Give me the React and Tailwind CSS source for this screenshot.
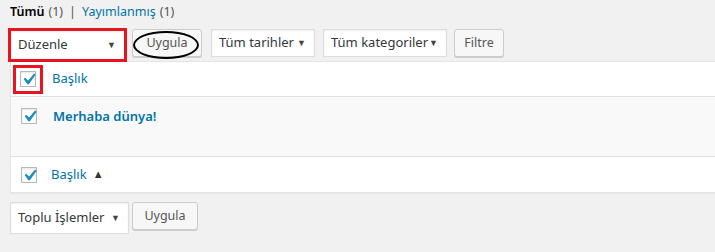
import React from "react";

function Check() {
  return (
    <span className="relative block h-[16px] w-[16px] shrink-0 border border-[#b4b9be] bg-white shadow-[inset_0_1px_2px_rgba(0,0,0,0.1)]">
      <svg className="absolute left-[-4px] top-[-4px]" width="23" height="23" viewBox="0 0 20 20">
        <path d="M14.83 4.89l1.34.94-5.81 8.38H9.02L5.78 9.67l1.34-1.25 2.57 2.4z" fill="#1e8cbe" />
      </svg>
    </span>
  );
}

function Select({ label, className }) {
  return (
    <div
      className={
        "flex h-[28px] shrink-0 items-center justify-between whitespace-nowrap border border-[#ddd] bg-white pl-[7px] pr-[8px] text-[13px] text-[#32373c] shadow-[inset_0_1px_2px_rgba(0,0,0,0.07)] " +
        (className || "")
      }
    >
      <span>{label}</span>
      <span className="text-[9px] text-[#444]">▼</span>
    </div>
  );
}

function Button({ label, className }) {
  return (
    <div
      className={
        "flex h-[28px] shrink-0 items-center justify-center whitespace-nowrap rounded-[3px] border border-[#ccc] bg-[#f7f7f7] text-[12.5px] text-[#555] shadow-[0_1px_0_#ccc] " +
        (className || "")
      }
    >
      {label}
    </div>
  );
}

export default function App() {
  return (
    <div
      className="h-[252px] w-[715px] overflow-hidden bg-[#f1f1f1] pl-[10px] text-[13px]"
      style={{ fontFamily: '"Noto Sans", "Open Sans", sans-serif' }}
    >
      {/* filtre linkleri */}
      <div className="flex h-[25px] items-center gap-[4px] whitespace-nowrap text-[12.5px]">
        <span className="font-semibold text-black">Tümü</span>
        <span className="text-[#555]">(1)</span>
        <span className="px-[2px] text-[#555]">|</span>
        <span className="text-[#0073aa]">Yayımlanmış</span>
        <span className="text-[#555]">(1)</span>
      </div>

      {/* üst araç çubuğu */}
      <div className="flex h-[36px] items-start">
        <div className="-ml-[2px] mt-[3px] shrink-0 border-[3px] border-[#e8141f]">
          <Select label="Düzenle" className="h-[26px] w-[113px] border-0" />
        </div>
        <div className="relative ml-[5px] mt-[4px] shrink-0">
          <Button label="Uygula" className="w-[70px]" />
          <div className="absolute left-[1px] top-[2px] h-[28px] w-[66px] rounded-[50%] border-[2px] border-black" />
        </div>
        <Select label="Tüm tarihler" className="ml-[9px] mt-[4px] w-[104px]" />
        <Select label="Tüm kategoriler" className="ml-[8px] mt-[4px] w-[124px]" />
        <Button label="Filtre" className="ml-[7px] mt-[4px] w-[50px]" />
      </div>

      {/* tablo */}
      <div className="border-y border-l border-[#e5e5e5] bg-white shadow-[0_1px_1px_rgba(0,0,0,0.04)]">
        <div className="flex h-[35px] items-center border-b border-[#e1e1e1]">
          <div className="ml-[2px] flex h-[29px] w-[30px] shrink-0 items-center justify-center border-[3px] border-[#e8141f]">
            <Check />
          </div>
          <span className="ml-[9px] text-[13px] text-[#0073aa]">Başlık</span>
        </div>
        <div className="flex h-[60px] items-start border-b border-[#e1e1e1] bg-[#f9f9f9] pt-[10px]">
          <div className="ml-[10px] mt-[1px]">
            <Check />
          </div>
          <span className="ml-[16px] text-[13px] font-semibold text-[#0073aa]">Merhaba dünya!</span>
        </div>
        <div className="flex h-[35px] items-center">
          <div className="ml-[10px]">
            <Check />
          </div>
          <span className="ml-[14px] text-[13px] text-[#0073aa]">Başlık</span>
          <span className="ml-[6px] text-[11px] text-[#333]">▲</span>
        </div>
      </div>

      {/* alt araç çubuğu */}
      <div className="mt-[9px] flex items-start gap-[3px]">
        <Select label="Toplu İşlemler" className="h-[32px] w-[119px]" />
        <Button label="Uygula" className="w-[66px]" />
      </div>
    </div>
  );
}
